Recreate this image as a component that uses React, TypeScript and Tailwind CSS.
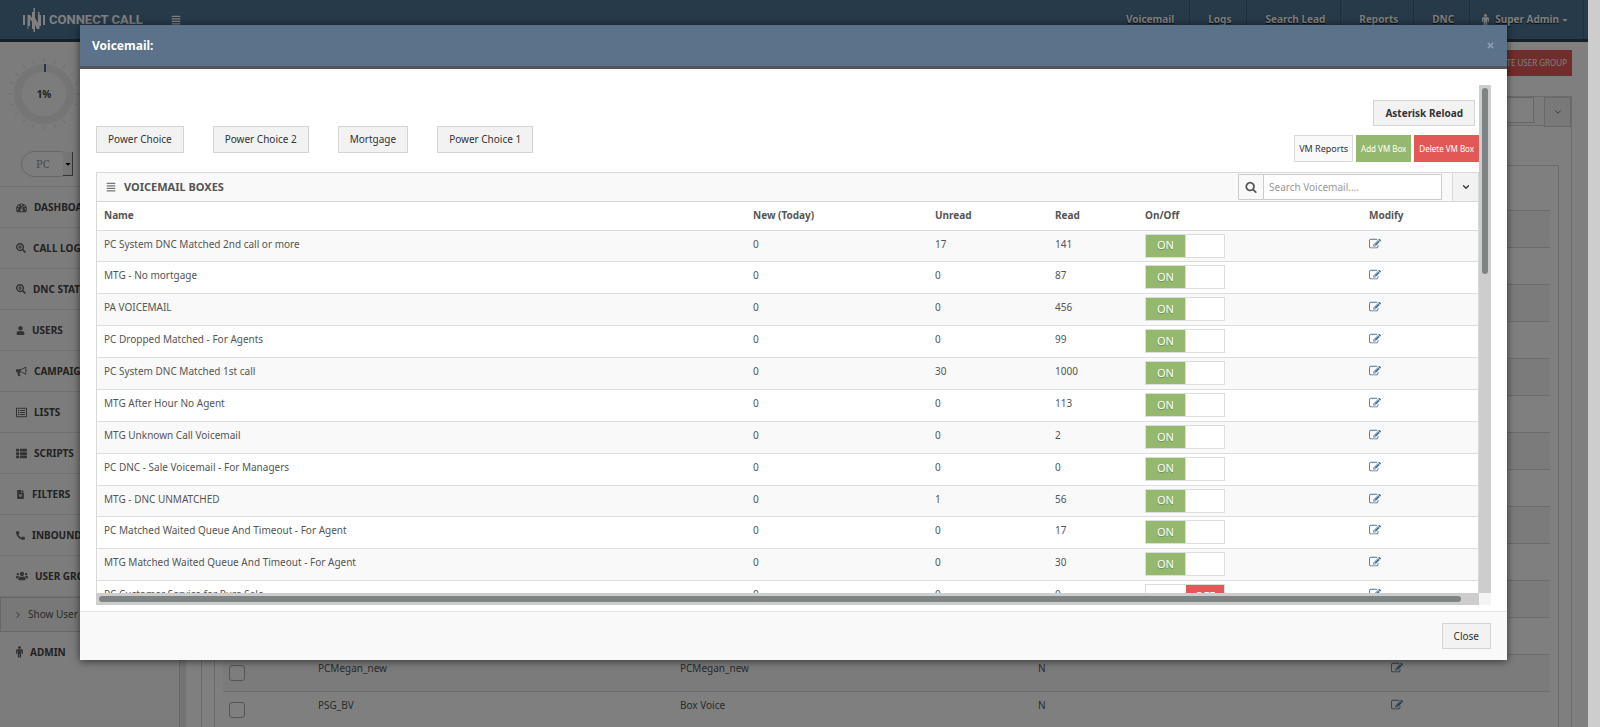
import { useState } from 'react';
import type { ReactNode } from 'react';
import {
  FaAlignJustify,
  FaCaretDown,
  FaFileAlt,
  FaPhoneAlt,
  FaRegListAlt,
  FaSearchPlus,
  FaThList,
  FaTimes,
  FaUser,
  FaUsers,
} from 'react-icons/fa';
import { FiChevronDown, FiChevronRight } from 'react-icons/fi';

const voicemailBoxes = [
  { name: 'PC System DNC Matched 2nd call or more', today: 0, unread: 17, read: 141, on: true },
  { name: 'MTG - No mortgage', today: 0, unread: 0, read: 87, on: true },
  { name: 'PA VOICEMAIL', today: 0, unread: 0, read: 456, on: true },
  { name: 'PC Dropped Matched - For Agents', today: 0, unread: 0, read: 99, on: true },
  { name: 'PC System DNC Matched 1st call', today: 0, unread: 30, read: 1000, on: true },
  { name: 'MTG After Hour No Agent', today: 0, unread: 0, read: 113, on: true },
  { name: 'MTG Unknown Call Voicemail', today: 0, unread: 0, read: 2, on: true },
  { name: 'PC DNC - Sale Voicemail - For Managers', today: 0, unread: 0, read: 0, on: true },
  { name: 'MTG - DNC UNMATCHED', today: 0, unread: 1, read: 56, on: true },
  { name: 'PC Matched Waited Queue And Timeout - For Agent', today: 0, unread: 0, read: 17, on: true },
  { name: 'MTG Matched Waited Queue And Timeout - For Agent', today: 0, unread: 0, read: 30, on: true },
  { name: 'PC Customer Service for Pure Sale', today: 0, unread: 0, read: 0, on: false },
];

const emptyGroup = { id: '', name: '', forced: '' };

const userGroups = [
  ...Array.from({ length: 12 }, () => emptyGroup),
  { id: 'PCMegan_new', name: 'PCMegan_new', forced: 'N' },
  { id: 'PSG_BV', name: 'Box Voice', forced: 'N' },
];

function DashboardIcon() {
  return (
    <svg viewBox="0 0 1792 1792" width="11" height="11" fill="currentColor" aria-hidden="true">
      <path d="M384 1152q0-53-37.5-90.5t-90.5-37.5-90.5 37.5-37.5 90.5 37.5 90.5 90.5 37.5 90.5-37.5 37.5-90.5zm192-448q0-53-37.5-90.5t-90.5-37.5-90.5 37.5-37.5 90.5 37.5 90.5 90.5 37.5 90.5-37.5 37.5-90.5zm428 481l101-382q6-26-7.5-48.5t-38.5-29.5-48 6.5-30 39.5l-101 382q-60 5-107 43.5t-63 98.5q-20 77 20 146t117 89 146-20 89-117q16-60-6-117t-72-91zm660-33q0-53-37.5-90.5t-90.5-37.5-90.5 37.5-37.5 90.5 37.5 90.5 90.5 37.5 90.5-37.5 37.5-90.5zm-640-640q0-53-37.5-90.5t-90.5-37.5-90.5 37.5-37.5 90.5 37.5 90.5 90.5 37.5 90.5-37.5 37.5-90.5zm448 192q0-53-37.5-90.5t-90.5-37.5-90.5 37.5-37.5 90.5 37.5 90.5 90.5 37.5 90.5-37.5 37.5-90.5zm320 448q0 261-141 483-19 29-54 29h-1402q-35 0-54-29-141-221-141-483 0-182 71-348t191-286 286-191 348-71 348 71 286 191 191 286 71 348z" />
    </svg>
  );
}

function BullhornIcon() {
  return (
    <svg viewBox="0 0 1792 1792" width="11" height="11" fill="currentColor" aria-hidden="true">
      <path d="M1664 640q53 0 90.5 37.5t37.5 90.5-37.5 90.5-90.5 37.5v384q0 52-38 90t-90 38q-417-347-812-380-58 19-91 66t-31 100.5 40 92.5q-20 33-23 65.5t6 58 33.5 55 48 50 61.5 50.5q-29 58-111.5 83t-168.5 11.5-132-55.5q-7-23-29.5-87.5t-32-94.5-23-89-15-101 3.5-98.5 22-110.5h-122q-66 0-113-47t-47-113v-192q0-66 47-113t113-47h480q435 0 896-384 52 0 90 38t38 90v384zm-128 604v-954q-394 302-768 343v270q377 42 768 341z" />
    </svg>
  );
}

function EditIcon() {
  return (
    <svg viewBox="0 0 1792 1792" width="12" height="12" fill="currentColor" aria-hidden="true">
      <path d="M888 1184l116-116-152-152-116 116v56h96v96h56zm440-720q-16-16-33 1l-350 350q-17 17-1 33t33-1l350-350q17-17 1-33zm80 594v190q0 119-84.5 203.5t-203.5 84.5h-832q-119 0-203.5-84.5t-84.5-203.5v-832q0-119 84.5-203.5t203.5-84.5h832q63 0 117 25 15 7 18 23 3 17-9 29l-49 49q-14 14-32 8-23-6-45-6h-832q-66 0-113 47t-47 113v832q0 66 47 113t113 47h832q66 0 113-47t47-113v-126q0-13 9-22l64-64q15-15 35-7t20 29zm-96-738l288 288-672 672h-288v-288zm444 132l-92 92-288-288 92-92q28-28 68-28t68 28l152 152q28 28 28 68t-28 68z" />
    </svg>
  );
}

function MaleIcon() {
  return (
    <svg viewBox="384 0 1024 1792" width="7" height="12" fill="currentColor" aria-hidden="true">
      <path d="M1408 672v416q0 40-28 68t-68 28-68-28-28-68v-352h-64v912q0 46-33 79t-79 33-79-33-33-79v-464h-64v464q0 46-33 79t-79 33-79-33-33-79v-912h-64v352q0 40-28 68t-68 28-68-28-28-68v-416q0-80 56-136t136-56h640q80 0 136 56t56 136zm-288-448q0 93-65.5 158.5t-158.5 65.5-158.5-65.5-65.5-158.5 65.5-158.5 158.5-65.5 158.5 65.5 65.5 158.5z" />
    </svg>
  );
}

function SearchIcon() {
  return (
    <svg viewBox="0 0 1792 1792" width="12" height="12" fill="currentColor" aria-hidden="true">
      <path d="M1216 832q0-185-131.5-316.5t-316.5-131.5-316.5 131.5-131.5 316.5 131.5 316.5 316.5 131.5 316.5-131.5 131.5-316.5zm512 832q0 52-38 90t-90 38q-54 0-90-38l-343-342q-179 124-399 124-143 0-273.5-55.5t-225-150-150-225-55.5-273.5 55.5-273.5 150-225 225-150 273.5-55.5 273.5 55.5 225 150 150 225 55.5 273.5q0 220-124 399l343 343q37 37 37 90z" />
    </svg>
  );
}

function LogoMark() {
  return (
    <svg viewBox="0 0 22 24" width="22" height="24" fill="currentColor" aria-hidden="true">
      <path d="M0 7h2v10H0zM4.500 7H7l2 3V4h1.500V0H12v10l3 5V4h1.500v3H18v11h-1.500v3H14l-2-4v7h-1.500v-3H9v-7l-2-3v7H5.500v3H4.500zM20 7h2v10h-2z" />
    </svg>
  );
}

// Ring with 20 tick marks around it, the filled part starts at 12 o'clock
function Gauge() {
  const ticks = Array.from({ length: 20 }, (_, i) => i * 18);
  return (
    <svg viewBox="0 0 74 74" width="74" height="74" role="img" aria-label="1%">
      <circle cx="37" cy="37" r="26" fill="none" stroke="#ebebeb" strokeWidth="8" />
      {ticks.map(angle => (
        <path key={angle} d="M37 1v4" stroke="#dcdcdc" transform={`rotate(${angle} 37 37)`} />
      ))}
      <path d="M38 7v8" stroke="#4a6f92" strokeWidth="2" />
      <text x="37" y="41" textAnchor="middle" fill="#444" className="text-[10px] font-bold">1%</text>
    </svg>
  );
}

const menu: { label: string; icon: ReactNode }[] = [
  { label: 'DASHBOARD', icon: <DashboardIcon /> },
  { label: 'CALL LOGS', icon: <FaSearchPlus size={10} /> },
  { label: 'DNC STATS', icon: <FaSearchPlus size={10} /> },
  { label: 'USERS', icon: <FaUser size={9} /> },
  { label: 'CAMPAIGNS', icon: <BullhornIcon /> },
  { label: 'LISTS', icon: <FaRegListAlt size={11} /> },
  { label: 'SCRIPTS', icon: <FaThList size={11} /> },
  { label: 'FILTERS', icon: <FaFileAlt size={9} /> },
  { label: 'INBOUND', icon: <FaPhoneAlt size={9} /> },
  { label: 'USER GROUPS', icon: <FaUsers size={12} /> },
];

function TopBar() {
  return (
    <header className="flex h-[42px] shrink-0 items-stretch justify-between border-b-[3px] border-[#2b4050] bg-[#4d7492] text-[10px] font-bold text-white">
      <div className="flex items-center pl-[23px]">
        <a href="#home" className="flex items-center gap-1">
          <LogoMark />
          <span className="font-['Roboto',sans-serif] text-[13px] font-bold">CONNECT CALL</span>
        </a>
        <button type="button" aria-label="Toggle menu" className="ml-7">
          <FaAlignJustify size={10} />
        </button>
      </div>
      <nav className="mr-1 flex items-stretch text-shadow-[0_1px_1px_rgb(0_0_0/0.9)]">
        {['Voicemail', 'Logs', 'Search Lead', 'Reports', 'DNC'].map(item => (
          <a key={item} href={`#${item}`} className="flex items-center border-r border-[#3d6180] pr-[15px] pl-[18px]">
            {item}
          </a>
        ))}
        <a href="#account" className="flex items-center border-r border-[#3d6180] pr-3.5 pl-3">
          <span className="mr-1.5">
            <MaleIcon />
          </span>
          Super Admin
          <FaCaretDown size={8} className="ml-0.5" />
        </a>
      </nav>
    </header>
  );
}

function Sidebar() {
  return (
    <aside className="w-[180px] shrink-0 border-r border-[#d0d0d0] bg-[#f9f9f9] text-[10px] text-[#555]">
      <div className="flex h-[145px] flex-col items-start border-b border-[#e2e2e2] pt-[15px] pl-[7px]">
        <Gauge />
        <div className="relative mt-5 ml-3.5 h-[26px] w-[52px]">
          <select
            aria-label="Campaign type"
            className="h-full w-full appearance-none rounded-[13px] border border-[#ccc] bg-[#fbfbfb] pl-3.5 font-['Noto_Serif','DejaVu_Serif',serif] text-[11px] text-[#999]"
          >
            <option>PC</option>
          </select>
          <span className="pointer-events-none absolute top-px right-0 flex h-6 w-2.5 items-center justify-center border-r border-b border-[#666] bg-[#ececea] text-black">
            <FaCaretDown size={8} />
          </span>
        </div>
      </div>
      <ul>
        {menu.map(item => (
          <li key={item.label} className="border-b border-[#e2e2e2]">
            <a href={`#${item.label}`} className="flex h-10 items-center gap-[7px] pl-4 font-bold text-[#444]">
              <span className="text-[#666]">{item.icon}</span>
              {item.label}
            </a>
          </li>
        ))}
        <li className="border border-[#cfcfcf] bg-[#f0f0f0]">
          <a href="#show" className="flex h-[33px] items-center gap-[5px] pl-3">
            <FiChevronRight size={10} />
            Show User Groups
          </a>
        </li>
        <li>
          <a href="#admin" className="flex h-10 items-center gap-[7px] pl-4 font-bold text-[#444]">
            <span className="text-[#666]">
              <MaleIcon />
            </span>
            ADMIN
          </a>
        </li>
      </ul>
    </aside>
  );
}

function UserGroupsPage() {
  return (
    <main className="flex flex-1 flex-col border-l-[6px] border-[#e8e8e8] pt-2 pr-4 pl-[15px] text-[10px] text-[#555]">
      <div className="flex justify-end">
        <button type="button" className="h-[26px] bg-[#e25856] px-[5px] text-[8px] text-white">
          DELETE USER GROUP
        </button>
      </div>
      <section className="mt-5 border border-[#d9d9d9]">
        <div className="flex h-[29px] items-start justify-end border-b border-[#d9d9d9] bg-[#f9f9f9]">
          <input aria-label="Search user groups" className="h-[26px] w-[180px] border border-[#ccc] bg-white" />
          <button
            type="button"
            aria-label="Collapse"
            className="ml-2.5 flex h-[30px] w-[27px] items-center justify-center border border-[#d0d0d0] bg-[#f2f2f2]"
          >
            <FiChevronDown size={10} />
          </button>
        </div>
        <div className="px-3 pt-[39px]">
          <div className="border border-[#d9d9d9] px-2 pt-11">
            <table className="w-full table-fixed">
              <colgroup>
                <col className="w-[88px]" />
                <col className="w-[362px]" />
                <col className="w-[358px]" />
                <col className="w-[353px]" />
                <col />
              </colgroup>
              <tbody>
                {userGroups.map((group, i) => (
                  <tr key={i} className="h-[37px] border-t border-[#d9d9d9] odd:bg-[#f7f7f7]">
                    <td className="pl-1.5">
                      <input
                        type="checkbox"
                        aria-label={group.id || 'Group'}
                        className="block size-4 appearance-none rounded-[3px] border border-[#aaa] bg-white/40"
                      />
                    </td>
                    <td className="pt-1.5 pl-[7px] align-top leading-[15px]">{group.id}</td>
                    <td className="pt-1.5 pl-[7px] align-top leading-[15px]">{group.name}</td>
                    <td className="pt-1.5 pl-[7px] align-top leading-[15px]">{group.forced}</td>
                    <td className="pt-[7px] pl-[7px] align-top">
                      <button type="button" aria-label="Modify" className="block text-[#4d7496]">
                        <EditIcon />
                      </button>
                    </td>
                  </tr>
                ))}
              </tbody>
            </table>
          </div>
        </div>
      </section>
    </main>
  );
}

function Toggle({ defaultOn, label }: { defaultOn: boolean; label: string }) {
  const [on, setOn] = useState(defaultOn);

  return (
    <button
      type="button"
      role="switch"
      aria-checked={on}
      aria-label={label}
      onClick={() => setOn(!on)}
      className="flex h-6 w-20 border border-[#ddd] bg-white text-[11px] text-white text-shadow-[0_1px_1px_rgb(0_0_0/0.25)]"
    >
      {on ? (
        <span className="flex h-full w-10 items-center justify-center border-r border-[#ddd] bg-[#94b86e]">ON</span>
      ) : (
        <span className="ml-auto flex h-full w-[38px] items-center justify-center bg-[#e25856]">OFF</span>
      )}
    </button>
  );
}

function VoicemailTable() {
  return (
    <table className="h-[410px] w-full table-fixed text-[10px] text-[#555]">
      <colgroup>
        <col />
        <col className="w-[182px]" />
        <col className="w-[120px]" />
        <col className="w-[90px]" />
        <col className="w-56" />
        <col className="w-[116px]" />
      </colgroup>
      <thead>
        <tr className="h-7">
          {['Name', 'New (Today)', 'Unread', 'Read', 'On/Off', 'Modify'].map(title => (
            <th key={title} className="pl-[7px] text-left font-bold">{title}</th>
          ))}
        </tr>
      </thead>
      <tbody>
        {voicemailBoxes.map(box => (
          <tr key={box.name} className="border-t border-[#ddd] odd:bg-[#f9f9f9]">
            <td className="pt-1.5 pl-[7px] align-top leading-[15px]">{box.name}</td>
            <td className="pt-1.5 pl-[7px] align-top leading-[15px]">{box.today}</td>
            <td className="pt-1.5 pl-[7px] align-top leading-[15px]">{box.unread}</td>
            <td className="pt-1.5 pl-[7px] align-top leading-[15px]">{box.read}</td>
            <td className="pt-[3px] pl-[7px] align-top">
              <Toggle defaultOn={box.on} label={box.name} />
            </td>
            <td className="pt-[7px] pl-[7px] align-top">
              <button type="button" aria-label={`Modify ${box.name}`} className="block text-[#4d7496]">
                <EditIcon />
              </button>
            </td>
          </tr>
        ))}
      </tbody>
    </table>
  );
}

function VoicemailModal() {
  return (
    <div
      role="dialog"
      aria-label="Voicemail"
      className="mt-[25px] mr-[81px] ml-20 bg-white text-[10px] text-[#333] shadow-[0_1px_8px_rgb(0_0_0/0.6)]"
    >
      <div className="flex h-11 items-center justify-between border-b-[3px] border-[#555] bg-[#5c728a] px-3">
        <h3 className="text-[12px] font-bold text-white">Voicemail:</h3>
        <button type="button" aria-label="Close dialog" className="text-[#8d9eb0]">
          <FaTimes size={9} />
        </button>
      </div>

      <div className="px-4 pt-4 pb-1.5">
        <div className="flex h-[508px]">
          <div className="min-w-0 flex-1 overflow-hidden">
            <div className="flex justify-end pt-[15px] pr-1">
              <button type="button" className="h-[26px] border border-[#d4d4d4] bg-[#f2f2f2] px-[11px] font-bold">
                Asterisk Reload
              </button>
            </div>
            <div className="flex items-start justify-between">
              <div className="flex gap-[29px]">
                {['Power Choice', 'Power Choice 2', 'Mortgage', 'Power Choice 1'].map(label => (
                  <button key={label} type="button" className="h-[27px] border border-[#d4d4d4] bg-[#f2f2f2] px-[11px]">
                    {label}
                  </button>
                ))}
              </div>
              <div className="flex gap-[3px] pt-[9px]">
                <button type="button" className="h-[27px] border border-[#d9d9d9] bg-[#f9f9f9] px-1 text-[9px]">
                  VM Reports
                </button>
                <button type="button" className="h-[27px] bg-[#94b86e] px-[5px] text-[8px] text-white">
                  Add VM Box
                </button>
                <button type="button" className="h-[27px] bg-[#e25856] px-[5px] text-[8px] text-white">
                  Delete VM Box
                </button>
              </div>
            </div>

            <section className="mt-2.5 border border-[#d9d9d9]">
              <div className="flex h-[29px] items-center border-b border-[#d9d9d9] bg-[#f9f9f9]">
                <FaAlignJustify size={10} className="ml-[9px] text-[#777]" />
                <h4 className="ml-2 flex-1 text-[11px] font-bold text-[#555]">VOICEMAIL BOXES</h4>
                <label className="flex h-[26px] w-[204px] border border-[#ccc] bg-white">
                  <span className="flex w-[25px] items-center justify-center border-r border-[#ccc] bg-[#f9f9f9] text-[#555]">
                    <SearchIcon />
                  </span>
                  <input
                    aria-label="Search Voicemail"
                    placeholder="Search Voicemail...."
                    className="min-w-0 flex-1 px-[5px] outline-none placeholder:text-[#999]"
                  />
                </label>
                <button
                  type="button"
                  aria-label="Collapse panel"
                  className="ml-2.5 flex h-full w-[26px] items-center justify-center border-l border-[#d9d9d9] bg-[#f2f2f2]"
                >
                  <FiChevronDown size={10} strokeWidth={3} />
                </button>
              </div>
              <VoicemailTable />
            </section>
          </div>
          <div className="w-3 bg-[#cdcdcd] px-[3px] pt-[3px]">
            <div className="h-[186px] rounded-full bg-[#7e8383]" />
          </div>
        </div>
        <div className="flex h-3 bg-[#f5f4f2]">
          <div className="flex-1 bg-[#cdcdcd] py-[3px] pr-[18px] pl-[3px]">
            <div className="h-1.5 rounded-full bg-[#7e8383]" />
          </div>
          <div className="w-3" />
        </div>
      </div>

      <div className="flex justify-end border-t border-[#e5e5e5] bg-[#f9f9f9] px-4 py-[11px]">
        <button type="button" className="h-[26px] border border-[#d4d4d4] bg-[#f2f2f2] px-[11px]">
          Close
        </button>
      </div>
    </div>
  );
}

export default function App() {
  return (
    <div className="flex h-screen overflow-hidden bg-white font-['Noto_Sans','Open_Sans',sans-serif]">
      <div className="relative min-w-0 flex-1">
        <div className="flex h-full flex-col overflow-hidden">
          <TopBar />
          <div className="flex flex-1">
            <Sidebar />
            <UserGroupsPage />
          </div>
        </div>
        <div className="absolute inset-0 bg-black/50">
          <VoicemailModal />
        </div>
      </div>
      <div className="w-3 bg-[#cdcdcd]" />
    </div>
  );
}
